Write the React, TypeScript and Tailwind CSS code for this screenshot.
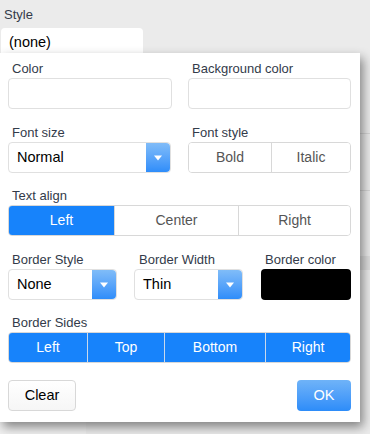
const font = { fontFamily: '"Liberation Sans", Arial, sans-serif' }

function Label({ children }: { children: React.ReactNode }) {
  return <div className="text-[13px] leading-[15px] text-[#333b4a] pl-1 mb-[2px]">{children}</div>
}

function Arrow() {
  return (
    <div className="w-[24px] h-full flex items-center justify-center rounded-r-[4px] bg-gradient-to-b from-[#80bcf8] to-[#2e8dfa]">
      <svg width="8" height="6" viewBox="0 0 8 6">
        <path d="M0 0.5 L8 0.5 L4 5.5 Z" fill="white" />
      </svg>
    </div>
  )
}

function Select({ value, width }: { value: string; width: string }) {
  return (
    <div className={`${width} h-[31px] flex border border-[#e0e0e0] rounded-[4px] bg-white`}>
      <div className="flex-1 flex items-center pl-[8px] text-[14.5px] text-black">{value}</div>
      <Arrow />
    </div>
  )
}

function Segmented({
  items,
  active,
  allActive,
}: {
  items: { label: string; w: string }[]
  active?: number
  allActive?: boolean
}) {
  return (
    <div className="flex h-[31px] rounded-[4px] border border-[#d8d8d8] overflow-hidden">
      {items.map((it, i) => {
        const on = allActive || i === active
        return (
          <div
            key={it.label}
            className={`${it.w} flex items-center justify-center text-[14px] ${
              on ? 'bg-[#1783fb] text-white' : 'bg-white text-[#555]'
            } ${i > 0 ? (allActive ? 'border-l border-[#c9d9ec]' : 'border-l border-[#d8d8d8]') : ''}`}
          >
            {it.label}
          </div>
        )
      })}
    </div>
  )
}

export default function App() {
  return (
    <div className="relative w-[370px] h-[434px] bg-[#ebebeb] overflow-hidden" style={font}>
      {/* page behind */}
      <div className="absolute right-0 top-[133px] w-[20px] h-px bg-[#d6d6d6]" />
      <div className="absolute right-0 top-[190px] w-[20px] h-px bg-[#d6d6d6]" />
      <div className="absolute right-0 top-[256px] w-[20px] h-[14px] bg-[#dedede]" />
      <div className="absolute left-0 top-[360px] w-[86px] h-[80px] bg-[#f0f0f0]" />

      <div className="pt-[5px] pl-[4px] text-[13px] text-[#333b4a]">Style</div>
      <div className="ml-[1px] mt-[3px] w-[142px] h-[30px] bg-white rounded-[4px] flex items-center pl-[8px] text-[14.5px] text-black">
        (none)
      </div>

      {/* popover */}
      <div className="absolute left-0 top-[53px] w-[360px] h-[369px] bg-white shadow-[3px_5px_10px_rgba(0,0,0,0.45)] pl-[8px] pr-[9px] pt-[8px]">
        <div className="flex gap-[16px]">
          <div className="w-[164px]">
            <Label>Color</Label>
            <div className="h-[31px] border border-[#e0e0e0] rounded-[4px]" />
          </div>
          <div className="w-[163px]">
            <Label>Background color</Label>
            <div className="h-[31px] border border-[#e0e0e0] rounded-[4px]" />
          </div>
        </div>

        <div className="flex gap-[17px] mt-[16px]">
          <div className="w-[163px]">
            <Label>Font size</Label>
            <Select value="Normal" width="w-[163px]" />
          </div>
          <div className="w-[163px]">
            <Label>Font style</Label>
            <Segmented
              items={[
                { label: 'Bold', w: 'w-[82px]' },
                { label: 'Italic', w: 'flex-1' },
              ]}
            />
          </div>
        </div>

        <div className="mt-[15px]">
          <Label>Text align</Label>
          <Segmented
            active={0}
            items={[
              { label: 'Left', w: 'w-[105px]' },
              { label: 'Center', w: 'w-[124px]' },
              { label: 'Right', w: 'flex-1' },
            ]}
          />
        </div>

        <div className="flex mt-[16px]">
          <div className="w-[126px]">
            <Label>Border Style</Label>
            <Select value="None" width="w-[109px]" />
          </div>
          <div className="w-[127px]">
            <Label>
              <span className="pl-[1px]">Border Width</span>
            </Label>
            <Select value="Thin" width="w-[109px]" />
          </div>
          <div className="flex-1">
            <Label>Border color</Label>
            <div className="h-[31px] bg-black rounded-[4px]" />
          </div>
        </div>

        <div className="mt-[15px]">
          <Label>Border Sides</Label>
          <Segmented
            allActive
            items={[
              { label: 'Left', w: 'w-[78px]' },
              { label: 'Top', w: 'w-[77px]' },
              { label: 'Bottom', w: 'w-[101px]' },
              { label: 'Right', w: 'flex-1' },
            ]}
          />
        </div>

        <div className="flex justify-between mt-[17px]">
          <button className="w-[68px] h-[31px] border border-[#d8d8d8] rounded-[4px] bg-gradient-to-b from-white to-[#f6f6f6] text-[14.5px] text-black">
            Clear
          </button>
          <button className="w-[54px] h-[31px] rounded-[4px] bg-gradient-to-b from-[#6fb3f8] to-[#2c8cf9] text-[14.5px] text-white">
            OK
          </button>
        </div>
      </div>
    </div>
  )
}
